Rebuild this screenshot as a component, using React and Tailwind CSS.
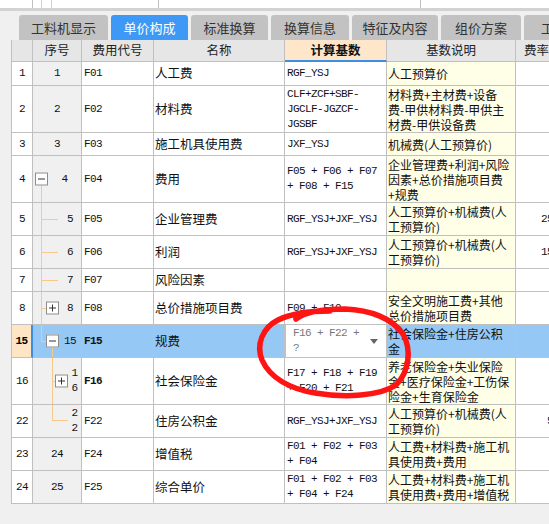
const CN = "font-['Noto_Sans_CJK_SC',sans-serif]";
const MONO = "font-['Liberation_Mono','Noto_Sans_CJK_SC',monospace] text-[11px] tracking-[-0.6px]";

const tabs = [
  { label: '工料机显示', w: 'w-[89px]' },
  { label: '单价构成', w: 'w-[77px]', active: true },
  { label: '标准换算', w: 'w-[77px]' },
  { label: '换算信息', w: 'w-[78px]' },
  { label: '特征及内容', w: 'w-[86px]' },
  { label: '组价方案', w: 'w-[80px]' },
  { label: '工料', w: 'w-[60px]' },
];

const rows = [
  { h: 'h-[24px]', no: '1', seq: { kind: 'plain', text: '1' }, code: 'F01', name: '人工费', base: ['RGF_YSJ'], desc: ['人工预算价'] },
  { h: 'h-[47px]', no: '2', seq: { kind: 'plain', text: '2' }, code: 'F02', name: '材料费', base: ['CLF+ZCF+SBF-', 'JGCLF-JGZCF-', 'JGSBF'], desc: ['材料费+主材费+设备', '费-甲供材料费-甲供主', '材费-甲供设备费'] },
  { h: 'h-[23px]', no: '3', seq: { kind: 'plain', text: '3' }, code: 'F03', name: '施工机具使用费', base: ['JXF_YSJ'], desc: ['机械费(人工预算价)'] },
  { h: 'h-[47px]', no: '4', seq: { kind: 'root', text: '4' }, code: 'F04', name: '费用', base: ['F05 + F06 + F07', '+ F08 + F15'], desc: ['企业管理费+利润+风险', '因素+总价措施项目费', '+规费'] },
  { h: 'h-[33px]', no: '5', seq: { kind: 'leaf1', text: '5' }, code: 'F05', name: '企业管理费', base: ['RGF_YSJ+JXF_YSJ'], desc: ['人工预算价+机械费(人', '工预算价)'], rate: '25' },
  { h: 'h-[33px]', no: '6', seq: { kind: 'leaf1', text: '6' }, code: 'F06', name: '利润', base: ['RGF_YSJ+JXF_YSJ'], desc: ['人工预算价+机械费(人', '工预算价)'], rate: '15' },
  { h: 'h-[23px]', no: '7', seq: { kind: 'leaf1', text: '7' }, code: 'F07', name: '风险因素', base: [], desc: [] },
  { h: 'h-[33px]', no: '8', seq: { kind: 'node1', text: '8' }, code: 'F08', name: '总价措施项目费', base: ['F09 + F10'], desc: ['安全文明施工费+其他', '总价措施项目费'] },
  { h: 'h-[33px]', no: '15', seq: { kind: 'open1', text: '15' }, code: 'F15', name: '规费', base: ['F16 + F22 +', '?'], desc: ['社会保险金+住房公积', '金'], selected: true },
  { h: 'h-[47px]', no: '16', seq: { kind: 'node2', text: ['1', '6'] }, code: 'F16', name: '社会保险金', base: ['F17 + F18 + F19', '+ F20 + F21'], desc: ['养老保险金+失业保险', '金+医疗保险金+工伤保', '险金+生育保险金'] },
  { h: 'h-[33px]', no: '22', seq: { kind: 'leaf2', text: ['2', '2'] }, code: 'F22', name: '住房公积金', base: ['RGF_YSJ+JXF_YSJ'], desc: ['人工预算价+机械费(人', '工预算价)'], rate: '5' },
  { h: 'h-[33px]', no: '23', seq: { kind: 'plain', text: '24' }, code: 'F24', name: '增值税', base: ['F01 + F02 + F03', '+ F04'], desc: ['人工费+材料费+施工机', '具使用费+费用'] },
  { h: 'h-[33px]', no: '24', seq: { kind: 'plain', text: '25' }, code: 'F25', name: '综合单价', base: ['F01 + F02 + F03', '+ F04 + F24'], desc: ['人工费+材料费+施工机', '具使用费+费用+增值税'] },
];

const cell = 'border-r border-b border-[#c0c0c0] flex items-center overflow-hidden';

// tree expander box (+ / -)
function Box({ plus, pos }) {
  return (
    <span className={`absolute top-1/2 -translate-y-1/2 w-[13px] h-[13px] border border-[#8c8c8c] bg-white ${pos}`}>
      <span className="absolute left-[2px] right-[2px] top-[5px] h-px bg-[#333]" />
      {plus && <span className="absolute top-[2px] bottom-[2px] left-[5px] w-px bg-[#333]" />}
    </span>
  );
}

function SeqCell({ seq, selected }) {
  const base = `${cell} relative w-[49px] ${MONO} text-[#111]`;
  const line = 'absolute bg-[#f8c98a]';
  if (seq.kind === 'plain') {
    return <div className={`${base} justify-center`}>{seq.text}</div>;
  }
  if (seq.kind === 'root') {
    return (
      <div className={base}>
        <span className={`${line} left-[8px] top-[29px] -bottom-px w-px`} />
        <Box pos="left-[2px]" />
        <span className="w-[15px] shrink-0" />
        <span className="flex-1 text-center">{seq.text}</span>
      </div>
    );
  }
  if (seq.kind === 'leaf1') {
    return (
      <div className={base}>
        <span className={`${line} left-[8px] top-0 -bottom-px w-px`} />
        <span className={`${line} left-[8px] top-1/2 w-[17px] h-px`} />
        <span className="w-[26px] shrink-0" />
        <span className="flex-1 text-center">{seq.text}</span>
      </div>
    );
  }
  if (seq.kind === 'node1') {
    return (
      <div className={base}>
        <span className={`${line} left-[8px] top-0 -bottom-px w-px`} />
        <span className={`${line} left-[8px] top-1/2 w-[6px] h-px`} />
        <Box plus pos="left-[13px]" />
        <span className="w-[26px] shrink-0" />
        <span className="flex-1 text-center">{seq.text}</span>
      </div>
    );
  }
  if (seq.kind === 'open1') {
    return (
      <div className={`${base} ${selected ? 'bg-[#96c8f5]' : ''}`}>
        <span className={`${line} left-[8px] top-0 h-1/2 w-px`} />
        <span className={`${line} left-[8px] top-1/2 w-[6px] h-px`} />
        <span className={`${line} left-[19px] top-[22px] -bottom-px w-px`} />
        <Box pos="left-[13px]" />
        <span className="w-[26px] shrink-0" />
        <span className="flex-1 text-center">{seq.text}</span>
      </div>
    );
  }
  if (seq.kind === 'node2') {
    return (
      <div className={base}>
        <span className={`${line} left-[19px] top-0 -bottom-px w-px`} />
        <span className={`${line} left-[19px] top-1/2 w-[4px] h-px`} />
        <Box plus pos="left-[22px]" />
        <span className="w-[35px] shrink-0" />
        <span className="flex-1 text-center leading-[15px]">
          {seq.text[0]}
          <br />
          {seq.text[1]}
        </span>
      </div>
    );
  }
  return (
    <div className={base}>
      <span className={`${line} left-[19px] top-0 h-[15px] w-px`} />
      <span className={`${line} left-[19px] top-[15px] w-[16px] h-px`} />
      <span className="w-[35px] shrink-0" />
      <span className="flex-1 text-center leading-[15px]">
        {seq.text[0]}
        <br />
        {seq.text[1]}
      </span>
    </div>
  );
}

function Row({ r }) {
  const sel = r.selected;
  const bg = sel ? 'bg-[#96c8f5]' : 'bg-white';
  return (
    <div className={`flex ${r.h}`}>
      <div
        className={`${cell} w-[22px] border-l justify-center ${MONO} ${
          sel ? 'bg-[#fde5c6] font-bold border-r-2 border-r-[#3b8de6] text-black' : 'bg-white text-[#111]'
        }`}
      >
        {r.no}
      </div>
      <SeqCell seq={r.seq} selected={sel} />
      <div className={`${cell} w-[72px] pl-[2px] ${bg} ${MONO} text-[#111] ${r.code === 'F15' || r.code === 'F16' ? 'font-bold' : ''}`}>
        {r.code}
      </div>
      <div className={`${cell} w-[131px] pl-[1px] ${bg} ${CN} text-[12.5px] text-[#111] whitespace-nowrap`}>{r.name}</div>
      {sel ? (
        <div className={`${cell} w-[102px] relative bg-white border border-[#4a94e4] border-t-0 pl-[7px]`}>
          <div className={`${MONO} leading-[15px] text-[#777]`}>
            {r.base.map((l) => (
              <div key={l} className="whitespace-pre">{l}</div>
            ))}
          </div>
          <span className="absolute right-[8px] top-[14px] w-0 h-0 border-l-[4px] border-r-[4px] border-t-[5px] border-l-transparent border-r-transparent border-t-[#666]" />
        </div>
      ) : (
        <div className={`${cell} w-[102px] pl-[2px] ${bg}`}>
          <div className={`${MONO} leading-[15px] text-[#111]`}>
            {r.base.map((l) => (
              <div key={l} className="whitespace-pre">{l}</div>
            ))}
          </div>
        </div>
      )}
      <div className={`${cell} w-[129px] pl-[1px] ${sel ? 'bg-[#96c8f5]' : 'bg-[#fffee6]'}`}>
        <div className={`${CN} text-[12px] leading-[15px] text-[#111]`}>
          {r.desc.map((l) => (
            <div key={l} className="whitespace-nowrap">{l}</div>
          ))}
        </div>
      </div>
      <div className={`${cell} w-[42px] justify-end pr-[4px] ${bg} ${MONO} text-[#111]`}>{r.rate}</div>
    </div>
  );
}

export default function App() {
  return (
    <div className={`relative w-[549px] h-[524px] overflow-hidden bg-[#f0f0f0] ${CN}`}>
      {/* sliver of the panel above */}
      <div className="relative h-[8px] bg-white">
        <span className="absolute left-[32px] top-0 bottom-0 w-px bg-[#c0c0c0]" />
        <span className="absolute left-[41px] top-0 bottom-0 w-px bg-[#f8c98a]" />
        <span className="absolute left-[51px] top-0 bottom-0 w-px bg-[#f8c98a]" />
        <span className="absolute left-[158px] top-0 bottom-0 w-px bg-[#c0c0c0]" />
        <span className="absolute left-[420px] top-0 bottom-0 w-px bg-[#c0c0c0]" />
      </div>
      <div className="h-[3px] bg-[#d2d2d2]" />

      {/* tabs */}
      <div className="flex gap-[3px] pl-[19px] pt-[4px] h-[29px]">
        {tabs.map((t) => (
          <div
            key={t.label}
            className={`${t.w} shrink-0 h-[25px] rounded-t-[3px] flex items-center justify-center text-[13px] ${
              t.active ? 'bg-[#3d98f6] text-white' : 'bg-[#c2c2c2] text-[#333]'
            }`}
          >
            {t.label}
          </div>
        ))}
      </div>

      {/* grid */}
      <div className="pl-[11px] w-[620px]">
        <div className="flex h-[22px] bg-[#e6e6e6] text-[12.5px] text-[#222]">
          <div className={`${cell} w-[22px] border-l`} />
          <div className={`${cell} w-[49px] justify-center`}>序号</div>
          <div className={`${cell} w-[72px] justify-center`}>费用代号</div>
          <div className={`${cell} w-[131px] justify-center`}>名称</div>
          <div className={`${cell} w-[102px] justify-center bg-[#fde6c9] font-bold text-[#111] border-b-2 border-b-[#3d8fe6]`}>计算基数</div>
          <div className={`${cell} w-[129px] justify-center`}>基数说明</div>
          <div className={`${cell} w-[42px] justify-center`}>费率</div>
        </div>
        {rows.map((r) => (
          <Row key={r.no} r={r} />
        ))}
      </div>

      {/* red hand-drawn annotation */}
      <svg className="absolute left-0 top-0 pointer-events-none" width="549" height="524" viewBox="0 0 549 524">
        <path
          d="M 296 319 C 305 312, 322 309, 345 309 C 370 310, 392 318, 403 334 C 412 350, 409 372, 396 385 C 380 396, 345 398, 315 393 C 290 389, 270 378, 262 360 C 256 345, 262 328, 278 320 C 292 313, 312 311, 330 311"
          fill="none"
          stroke="#ff1414"
          strokeWidth="5.5"
          strokeLinecap="round"
        />
      </svg>
    </div>
  );
}
